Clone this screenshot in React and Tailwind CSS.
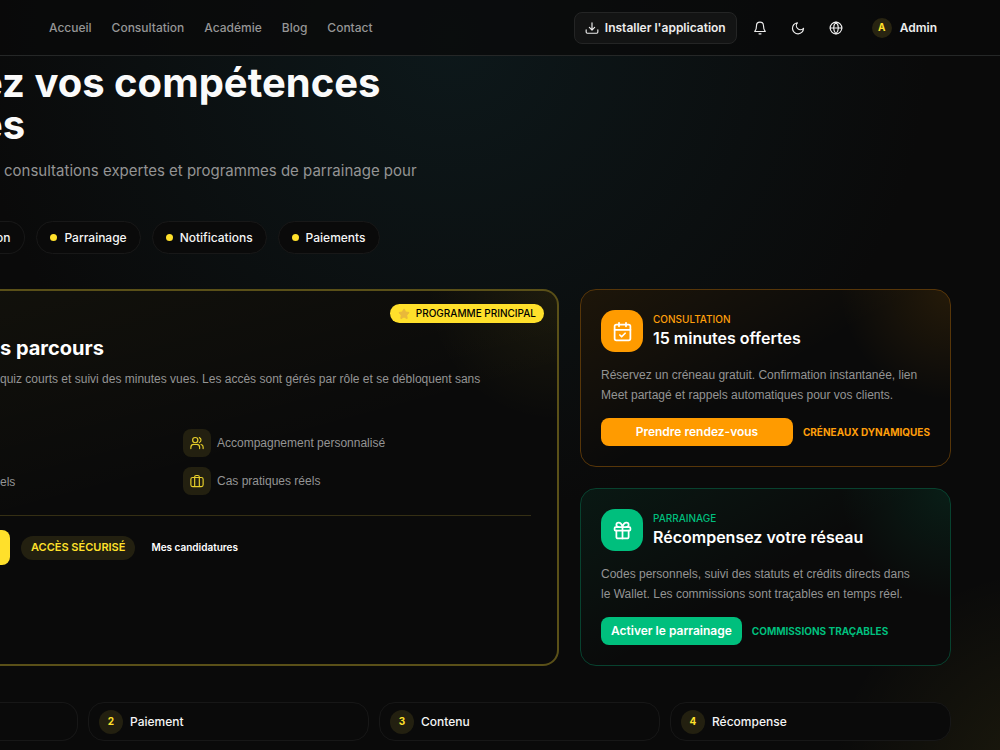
import React from 'react';
import { CalendarCheck, Gift, Globe, Star } from 'lucide-react';

const navLinks = ['Accueil', 'Consultation', 'Académie', 'Blog', 'Contact'];
const tags = ['Parrainage', 'Notifications', 'Paiements'];
const steps = [
    { number: 2, label: 'Paiement' },
    { number: 3, label: 'Contenu' },
    { number: 4, label: 'Récompense' },
];

const Icon = ({ children }) => (
    <svg width="14" height="14" viewBox="0 0 24 24" fill="none" stroke="currentColor" strokeWidth="2" strokeLinecap="round" strokeLinejoin="round">
        {children}
    </svg>
);

const DownloadIcon = () => (
    <Icon>
        <path d="M12 3v12M7.5 11l4.5 4.5 4.5-4.5" />
        <path d="M2 15v4a2 2 0 0 0 2 2h16a2 2 0 0 0 2-2v-4" />
    </Icon>
);

const BellIcon = () => (
    <Icon>
        <path d="M6 8a6 6 0 0 1 12 0c0 7 3 10 3 10H3s3-3 3-10" />
        <path d="M10.3 22h3.4" />
    </Icon>
);

const MoonIcon = () => (
    <Icon>
        <path d="M11 3a7 7 0 0 0 10.5 9.5A9.5 9.5 0 1 1 11 3Z" />
    </Icon>
);

const UsersIcon = () => (
    <Icon>
        <circle cx="9" cy="7" r="4.5" />
        <path d="M1.5 21.5V19a5 5 0 0 1 5-4.5h5a5 5 0 0 1 5 4.5v2.5" />
        <path d="M16 2.8a4.5 4.5 0 0 1 0 8.4M19 14.5a4.5 4.5 0 0 1 3.5 4.5v2.5" />
    </Icon>
);

const LuggageIcon = () => (
    <Icon>
        <rect x="1.5" y="6" width="21" height="15.5" rx="3" />
        <path d="M8 21V5a2.5 2.5 0 0 1 2.5-2.5h3A2.5 2.5 0 0 1 16 5v16" />
    </Icon>
);

const Header = () => (
    <header className="flex items-center justify-between h-14 pl-[49px] pr-[63px] border-b border-[#252727] bg-[#0a0a0a]/75">
        <nav className="flex items-center gap-5 text-xs font-medium text-[#969696]">
            {navLinks.map(link => <a key={link} href="#">{link}</a>)}
        </nav>
        <div className="flex items-center">
            <button className="flex items-center gap-[6px] h-8 px-[10px] mr-4 rounded-lg border border-[#242525] bg-[#131414] text-xs font-semibold text-[#ededed]">
                <DownloadIcon />
                Installer l'application
            </button>
            <div className="flex items-center gap-6 text-[#ededed]">
                <button aria-label="Notifications"><BellIcon /></button>
                <button aria-label="Thème"><MoonIcon /></button>
                <button aria-label="Langue"><Globe size={14} /></button>
            </div>
            <button className="flex items-center gap-2 ml-[29px] text-xs font-semibold text-[#ededed]">
                <span className="flex items-center justify-center size-5 rounded-full bg-[#282411] text-[10px] font-bold text-[#ffe02b]">A</span>
                Admin
            </button>
        </div>
    </header>
);

const Feature = ({ icon, label }) => (
    <li className="flex items-center gap-[6px]">
        <span className="flex items-center justify-center size-7 rounded-lg bg-[#232010] text-[#e8cf2b]">{icon}</span>
        {label}
    </li>
);

const MainCard = () => (
    <article className="relative flex-1 pt-[45px] pr-[26px] rounded-r-2xl border-2 border-l-0 border-[#5a5018] bg-[#0a0a0a] bg-[radial-gradient(circle_at_100%_0%,#ffe02b12,transparent_130px),linear-gradient(165deg,#ffe02b08,transparent_45%)]">
        <span className="absolute top-[13px] right-[13px] flex items-center gap-[6px] h-[19px] px-2 rounded-full bg-[#ffe02b] text-[10px] font-medium text-black">
            <Star size={12} className="fill-[#e9b93a] text-[#e9b93a]" />
            PROGRAMME PRINCIPAL
        </span>
        <h2 className="text-xl leading-6 font-bold text-white">s parcours</h2>
        <p className="mt-[9px] font-['Liberation_Sans',sans-serif] text-xs leading-5 text-[#949494] whitespace-nowrap">
            quiz courts et suivi des minutes vues. Les accès sont gérés par rôle et se débloquent sans
        </p>
        <div className="flex mt-10 font-['Liberation_Sans',sans-serif] text-xs text-[#949494]">
            <div className="flex items-end w-[183px] h-[65px] pb-1">els</div>
            <ul className="flex flex-col gap-[10px]">
                <Feature icon={<UsersIcon />} label="Accompagnement personnalisé" />
                <Feature icon={<LuggageIcon />} label="Cas pratiques réels" />
            </ul>
        </div>
        <div className="flex items-center mt-5 pt-[14px] border-t border-[#352f14]">
            <button aria-label="Continuer" className="w-[10px] h-[35px] rounded-r-lg bg-[#ffe02b]" />
            <span className="flex items-center h-6 ml-[11px] px-[10px] rounded-full bg-[#232010] text-[11px] font-semibold text-[#ffe02b]">ACCÈS SÉCURISÉ</span>
            <a href="#" className="ml-4 text-[10px] font-semibold text-white">Mes candidatures</a>
        </div>
    </article>
);

const themes = {
    orange: {
        card: 'border-[#573609] bg-[radial-gradient(circle_at_100%_0%,#ff9d001c,transparent_110px),linear-gradient(150deg,#ff9d0014,transparent_50%)]',
        solid: 'bg-[#ff9b00]',
        text: 'text-[#ff9f0a]',
    },
    green: {
        card: 'border-[#08422f] bg-[radial-gradient(circle_at_100%_0%,#00c0801c,transparent_110px),linear-gradient(150deg,#00c08014,transparent_50%)]',
        solid: 'bg-[#00bf7d]',
        text: 'text-[#00bf7d]',
    },
};

const SideCard = ({ theme, icon, kicker, title, children, action, note, wide }) => (
    <article className={`p-5 rounded-2xl border bg-[#0a0a0a] ${theme.card}`}>
        <div className="flex items-center gap-[10px]">
            <span className={`flex items-center justify-center size-[42px] rounded-[14px] text-white ${theme.solid}`}>{icon}</span>
            <div>
                <p className={`text-[10px] leading-[14px] font-medium ${theme.text}`}>{kicker}</p>
                <h3 className="text-base leading-6 font-semibold text-white">{title}</h3>
            </div>
        </div>
        <p className="mt-[13px] font-['Liberation_Sans',sans-serif] text-xs leading-5 text-[#949494]">{children}</p>
        <div className="flex items-center gap-[10px] mt-[13px]">
            <button className={`h-7 px-[10px] rounded-lg text-xs font-semibold text-white ${theme.solid} ${wide ? 'flex-1' : ''}`}>{action}</button>
            <span className={`text-[10px] font-bold ${theme.text}`}>{note}</span>
        </div>
    </article>
);

const App = () => (
    <div className="min-h-screen overflow-hidden bg-[#0a0a0a] bg-[radial-gradient(circle_at_45%_5%,#10262b80,transparent_480px),radial-gradient(circle_at_105%_105%,#ffe02b14,transparent_220px)] font-['Inter',sans-serif]">
        <Header />
        <main className="pt-[6px] pr-[49px] pb-[9px]">
            <h1 className="-ml-[21px] text-[40px] leading-[42px] font-bold text-[#fafafa] whitespace-nowrap">
                ez vos compétences<br />es
            </h1>
            <p className="pl-1 mt-[13px] text-[15px] leading-6 text-[#949494]">consultations expertes et programmes de parrainage pour</p>

            <div className="flex gap-[11px] -ml-1 mt-[38px] text-xs font-medium text-[#f5f5f5]">
                <span className="flex items-center h-[33px] pr-[14px] rounded-r-full border border-l-0 border-[#181818] bg-[#0a0a0a]">on</span>
                {tags.map(tag => (
                    <span key={tag} className="flex items-center gap-[7px] h-[33px] px-[13px] rounded-full border border-[#181818] bg-[#0a0a0a]">
                        <span className="size-[7px] rounded-full bg-[#ffe02b]" />
                        {tag}
                    </span>
                ))}
            </div>

            <div className="flex gap-[21px] mt-[35px]">
                <MainCard />
                <div className="flex flex-col gap-[21px] w-[371px]">
                    <SideCard theme={themes.orange} icon={<CalendarCheck size={21} />} kicker="CONSULTATION" title="15 minutes offertes" action="Prendre rendez-vous" note="CRÉNEAUX DYNAMIQUES" wide>
                        Réservez un créneau gratuit. Confirmation instantanée, lien Meet partagé et rappels automatiques pour vos clients.
                    </SideCard>
                    <SideCard theme={themes.green} icon={<Gift size={21} />} kicker="PARRAINAGE" title="Récompensez votre réseau" action="Activer le parrainage" note="COMMISSIONS TRAÇABLES">
                        Codes personnels, suivi des statuts et crédits directs dans le&nbsp;Wallet. Les commissions sont traçables en temps réel.
                    </SideCard>
                </div>
            </div>

            <div className="flex gap-[10px] mt-9">
                <div className="w-[78px] h-[39px] rounded-r-2xl border border-l-0 border-[#171717]" />
                {steps.map(step => (
                    <div key={step.number} className="flex flex-1 items-center gap-[7px] h-[39px] px-[10px] rounded-2xl border border-[#171717] bg-[#0a0a0a] text-xs font-medium text-[#f5f5f5]">
                        <span className="flex items-center justify-center size-6 rounded-full bg-[#232010] text-[10px] font-bold text-[#ffe02b]">{step.number}</span>
                        {step.label}
                    </div>
                ))}
            </div>
        </main>
    </div>
);

export default App;
